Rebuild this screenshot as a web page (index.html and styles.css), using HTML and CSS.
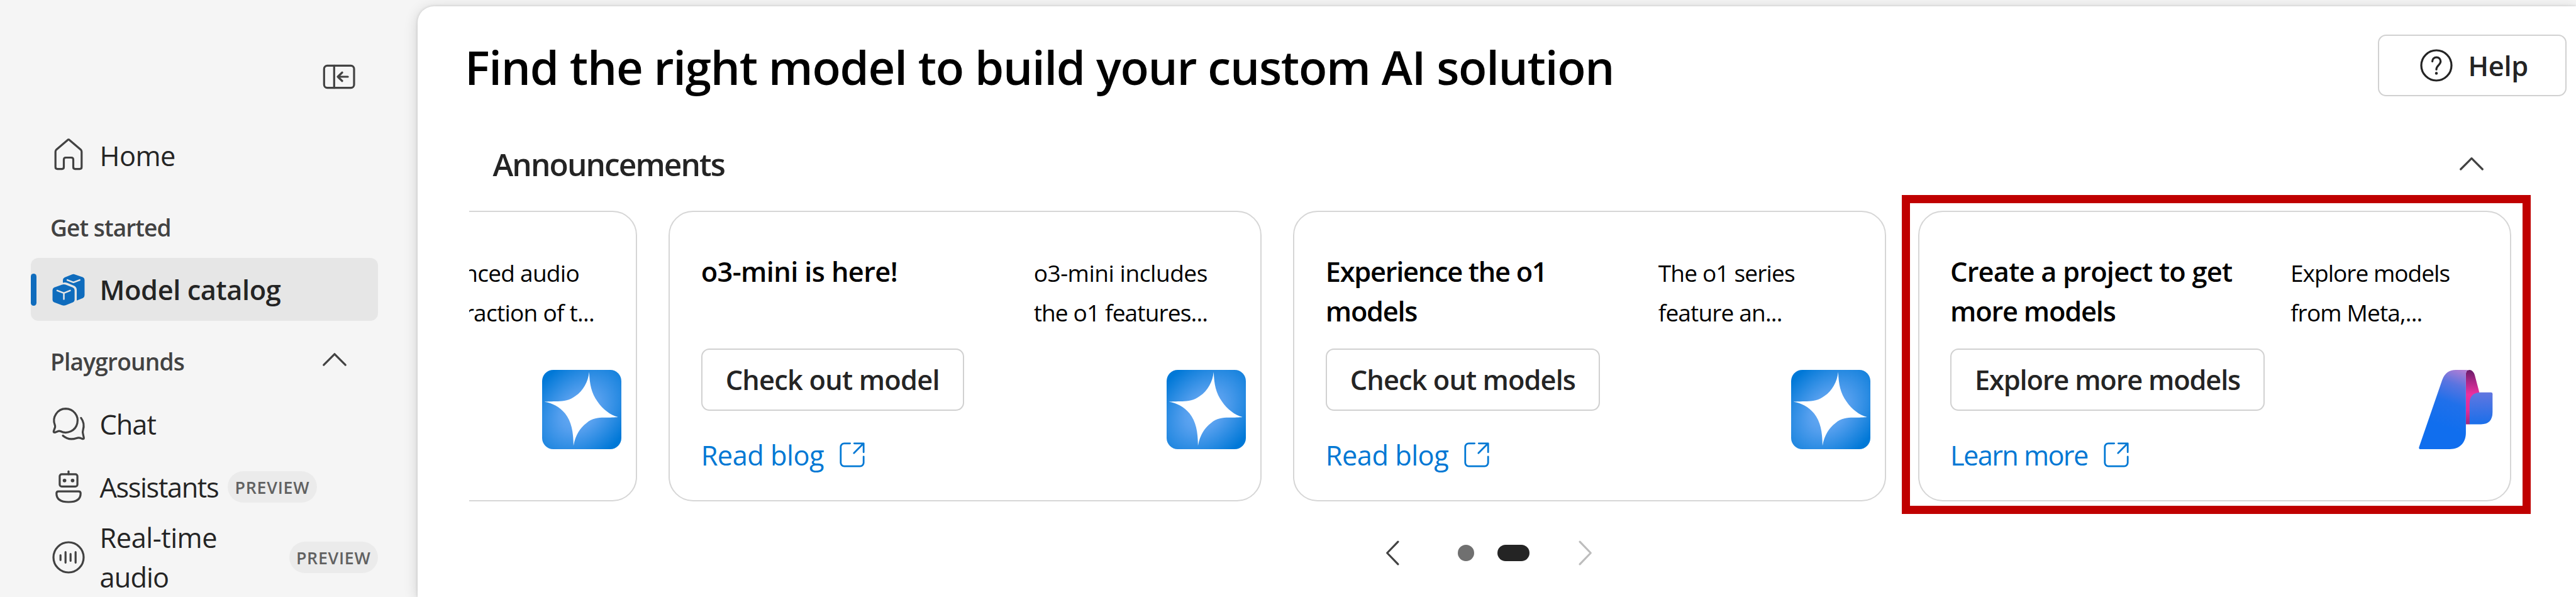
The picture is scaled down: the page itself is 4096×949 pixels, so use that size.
FILE: index.html
```html
<!DOCTYPE html>
<html lang="en">
<head>
<meta charset="utf-8">
<title>Model catalog</title>
<link rel="stylesheet" href="styles.css">
</head>
<body>
<svg class="defs" aria-hidden="true">
  <defs>
    <radialGradient id="gemFill" gradientUnits="userSpaceOnUse" cx="0" cy="0" r="1" gradientTransform="translate(48 52) rotate(-45) scale(82 60)">
      <stop offset="0" stop-color="#6fb0f6"/><stop offset=".35" stop-color="#559fee"/><stop offset="1" stop-color="#0078d7"/>
    </radialGradient>
    <linearGradient id="logoBig" gradientUnits="userSpaceOnUse" x1="285" y1="30" x2="175" y2="330">
      <stop offset="0" stop-color="#c07fd2"/><stop offset=".3" stop-color="#5a74e0"/><stop offset=".6" stop-color="#2070ea"/><stop offset="1" stop-color="#106eee"/>
    </linearGradient>
    <linearGradient id="logoPink" x1="0" y1="0" x2="0" y2="1">
      <stop offset="0" stop-color="#681b68"/><stop offset=".2" stop-color="#a82685"/><stop offset=".45" stop-color="#ec30a0"/><stop offset=".75" stop-color="#e02c9a"/><stop offset="1" stop-color="#9c2a80"/>
    </linearGradient>
    <linearGradient id="logoSmall" x1="0" y1="0" x2="0" y2="1">
      <stop offset="0" stop-color="#6176e0"/><stop offset="1" stop-color="#1a6fea"/>
    </linearGradient>
    <symbol id="gem" viewBox="0 0 100 100">
      <rect width="100" height="100" rx="14" fill="url(#gemFill)"/>
      <path fill="#fff" d="M59.4 2.5C58 15 52 26 42 33C35 38.5 27 39.5 20 39.6C12 39.7 6 39.8 3 40.2C12 41.5 22 46 29 55C37 65 39.5 78 39.6 95.7C42 82 48 73 56 67C63 61 71 60.3 78 60.2C86 60 92 60 95.8 59.5C86 57 76 49 70 40C62 29 60 18 59.4 2.5Z"/>
    </symbol>
    <symbol id="open" viewBox="0 0 20 20">
      <path d="M8.8 3.5H5.5a2 2 0 0 0-2 2v9a2 2 0 0 0 2 2h9a2 2 0 0 0 2-2V11M11.2 3.5h5.3v5M16.3 3.7L11 9"/>
    </symbol>
  </defs>
</svg>
<div class="app">
  <nav class="sidebar">
    <div class="collapse">
      <svg class="icon" viewBox="0 0 20 20"><rect x="2.6" y="4.5" width="14.9" height="11" rx="1.6"/><path d="M7.6 4.5v11M14.4 10H9.4M11.6 7.9L9.4 10l2.2 2.1"/></svg>
    </div>
    <a class="item item-home">
      <svg class="icon" viewBox="0 0 20 20"><path d="M3.5 8.2c0-.4.15-.7.4-1L9.5 2.4c.3-.28.7-.28 1 0l5.6 4.8c.25.3.4.6.4 1v7.6c0 .6-.4.95-.95.95h-2.3c-.55 0-.9-.4-.9-.95v-3.7c0-.6-.4-1-.95-1H8.6c-.55 0-.95.4-.95 1v3.7c0 .55-.35.95-.9.95h-2.3c-.55 0-.95-.35-.95-.95Z"/></svg>
      <span class="ls13">Home</span>
    </a>
    <div class="section section-start"><span class="ls25">Get started</span></div>
    <a class="item item-active">
      <svg class="icon cubes" viewBox="13 15 206 206">
        <path class="solid" d="M132 42Q141 38 150 42L190 56Q198 60 198 70V148Q198 158 190 162L158 175V122Q158 106 146 100L112 86Q100 81 87 84V70Q87 62 96 57Z"/>
        <path class="solid" d="M83 94Q92 90 101 94L138 108Q147 112 147 122V172Q147 180 139 184L101 199Q92 202 83 199L42 184Q34 180 34 172V122Q34 112 42 108Z"/>
        <path class="cut" d="M110 70L141 82L173 70M58 124L92 137L124 124M92 137V168"/>
      </svg>
      <span class="ls10">Model catalog</span>
    </a>
    <div class="section section-play">
      <span class="ls22">Playgrounds</span>
      <svg class="icon" viewBox="0 0 20 20"><path d="M4.6 11.9L10 6.5l5.4 5.4"/></svg>
    </div>
    <a class="item">
      <svg class="icon" viewBox="0 0 20 20"><path d="M8.6 2.4a5.9 5.9 0 1 1-2.6 11.2Q5.5 13.4 5 13.5L3.2 14.2Q2.5 14.3 2.6 13.6L3.3 11.6Q3.4 11 3.2 10.5A5.9 5.9 0 0 1 8.6 2.4ZM16.2 7C17.4 8.6 17.9 10.6 17.2 13Q16.9 14 17.2 15L17.6 16.8Q17.7 17.5 17 17.4L15.6 16.9Q14.8 16.7 14 17C11.5 17.9 9 17.4 7.2 15.8"/></svg>
      <span class="ls23">Chat</span>
    </a>
    <a class="item">
      <svg class="icon" viewBox="0 0 20 20"><path d="M10 2.3v1.4"/><rect x="5.6" y="3.7" width="8.8" height="6.1" rx="1"/><path d="M5 12.2h10q1 0 1 1C16 16.2 14 17.5 10 17.5S4 16.2 4 13.2q0-1 1-1Z"/><circle class="dotfill" cx="8" cy="6.8" r=".9"/><circle class="dotfill" cx="12" cy="6.8" r=".9"/></svg>
      <span class="ls32">Assistants</span>
      <span class="badge">PREVIEW</span>
    </a>
    <a class="item item-tall">
      <svg class="icon" viewBox="0 0 20 20"><circle cx="10" cy="10" r="7.5"/><path d="M6 8.9v2.4M8.5 7.4v5.2M11 8.3v3.4M13.5 7.4v5.2"/></svg>
      <span class="wide"><span class="ls11">Real-time</span><br><span class="ls20">audio</span></span>
      <span class="badge">PREVIEW</span>
    </a>
  </nav>

  <main class="main">
    <header class="header">
      <h1 class="ls17">Find the right model to build your custom AI solution</h1>
      <button class="btn help">
        <svg class="icon" viewBox="0 0 20 20"><circle cx="10" cy="10" r="7.5"/><path d="M8 8a2 2 0 0 1 4.1 0c0 1.8-2.1 2-2.1 4"/><circle class="dotfill" cx="10" cy="13.9" r=".7"/></svg>
        <span class="ls07">Help</span>
      </button>
    </header>

    <div class="ann-head">
      <h2 class="ls39">Announcements</h2>
      <svg class="icon" viewBox="0 0 20 20"><path d="M4.6 12.5L10 7.1l5.4 5.4"/></svg>
    </div>

    <section class="carousel">
      <div class="viewport">
        <article class="card">
          <div class="card-left"></div>
          <div class="card-side">
            <p class="desc desc-end"><span class="short ls20">nced audio</span><span class="ls20">raction of t...</span></p>
            <svg class="art"><use href="#gem"/></svg>
          </div>
        </article>
        <article class="card">
          <div class="card-left">
            <h3><span class="ls14">o3-mini is here!</span></h3>
            <button class="btn"><span class="ls18">Check out model</span></button>
            <a class="link"><span class="ls12">Read blog</span><svg class="icon-open"><use href="#open"/></svg></a>
          </div>
          <div class="card-side">
            <p class="desc"><span class="ls13">o3-mini includes</span><span class="ls24">the o1 features...</span></p>
            <svg class="art"><use href="#gem"/></svg>
          </div>
        </article>
        <article class="card">
          <div class="card-left">
            <h3><span class="ls29">Experience the o1</span><span class="ls29">models</span></h3>
            <button class="btn"><span class="ls21">Check out models</span></button>
            <a class="link"><span class="ls12">Read blog</span><svg class="icon-open"><use href="#open"/></svg></a>
          </div>
          <div class="card-side">
            <p class="desc"><span class="ls24">The o1 series</span><span class="ls24">feature an...</span></p>
            <svg class="art"><use href="#gem"/></svg>
          </div>
        </article>
        <article class="card card-project">
          <div class="card-left">
            <h3><span class="ls18">Create a project to get</span><span class="ls28">more models</span></h3>
            <button class="btn"><span class="ls27">Explore more models</span></button>
            <a class="link"><span class="ls37">Learn more</span><svg class="icon-open"><use href="#open"/></svg></a>
          </div>
          <div class="card-side">
            <p class="desc"><span class="ls27">Explore models</span><span class="ls23">from Meta,...</span></p>
            <svg class="art" viewBox="34 40 404 404">
              <path fill="url(#logoPink)" d="M287 317V60Q288 40 305 40Q324 41 332 66L357 160L307 210V317Z"/>
              <path fill="url(#logoBig)" d="M236 40H305Q288 40 287 60V360C287 412 255 444 205 444H56Q46 444 48 434L166 92Q184 40 236 40Z"/>
              <path fill="url(#logoSmall)" d="M306 317V210Q307 156 362 155H415Q423 155 423 163V255Q423 317 364 317Z"/>
            </svg>
          </div>
        </article>
      </div>
      <div class="highlight"></div>
    </section>

    <div class="pager">
      <svg class="icon prev" viewBox="0 0 20 20"><path d="M12.8 4.4L7.4 10l5.4 5.6"/></svg>
      <span class="dot"></span>
      <span class="dot dot-on"></span>
      <svg class="icon next" viewBox="0 0 20 20"><path d="M7.2 4.4l5.4 5.6-5.4 5.6"/></svg>
    </div>
  </main>
</div>
</body>
</html>
```

FILE: styles.css
```css
* { box-sizing: border-box; }
body {
  margin: 0;
  background: #f5f5f5;
  color: #242424;
  font-family: "Open Sans", "Noto Sans", sans-serif;
  font-size: 43.35px;
  line-height: 63px;
}
h1, h2, h3, p { margin: 0; font-weight: 600; }
.defs { position: absolute; width: 0; height: 0; }
.app { display: flex; width: 4096px; height: 949px; overflow: hidden; }

.icon {
  flex: none;
  width: 64px;
  height: 64px;
  fill: none;
  stroke: #424242;
  stroke-width: 1;
  stroke-linecap: round;
  stroke-linejoin: round;
}
.dotfill { fill: #424242; stroke: none; }

/* Sidebar */
.sidebar {
  flex: none;
  width: 664px;
  padding: 90px 63px 0 48.5px;
  display: flex;
  flex-direction: column;
}
.collapse { display: flex; justify-content: flex-end; height: 64px; padding-right: 30px; }
.item {
  flex: none;
  display: flex;
  align-items: center;
  height: 100px;
  padding-left: 28px;
  white-space: nowrap;
}
.item > .icon { display: block; margin-right: 18px; }
.item-home { margin-top: 43px; }
.item-active {
  position: relative;
  margin-top: 24px;
  background: #e6e6e6;
  border-radius: 12px;
  font-weight: 600;
}
.item-active::before {
  content: "";
  position: absolute;
  left: 0;
  top: 24.5px;
  width: 9.5px;
  height: 51px;
  border-radius: 5px;
  background: #0f6cbd;
}
.cubes { stroke: none; }
.solid { fill: #0f6cbd; }
.cut { fill: none; stroke: #e6e6e6; stroke-width: 8; }
.item-tall { height: 124px; }
.wide { flex: 1; }
.badge {
  flex: none;
  width: 141.5px;
  height: 50.5px;
  margin-left: 15px;
  border-radius: 26px;
  background: #ebebeb;
  color: #616161;
  font-size: 26.8px;
  font-weight: 600;
  line-height: 51px;
  letter-spacing: .7px;
  text-align: center;
}
.section {
  flex: none;
  display: flex;
  align-items: center;
  justify-content: space-between;
  height: 50px;
  padding: 0 37px 0 31.5px;
  color: #424242;
  font-size: 37.1px;
  font-weight: 600;
}
.section-start { margin-top: 39px; }
.section-play { margin: 39px 0 25px; }

/* Main panel */
.main {
  flex: none;
  width: 3432px;
  margin-top: 10px;
  padding-top: 45px;
  display: flex;
  flex-direction: column;
  background: #fff;
  border-top-left-radius: 26px;
  box-shadow: 0 4px 22px rgba(0, 0, 0, .16), 0 0 4px rgba(0, 0, 0, .14);
}
.header {
  display: flex;
  justify-content: space-between;
  align-items: center;
  height: 98px;
  padding: 0 15px 0 75px;
}
h1 { padding-top: 5px; color: #000; font-size: 74.3px; line-height: 90px; white-space: nowrap; }
.btn {
  display: flex;
  align-items: center;
  height: 99px;
  padding: 0 37px;
  border: 2.5px solid #d1d1d1;
  border-radius: 13px;
  background: #fff;
  color: #242424;
  font: inherit;
  font-weight: 600;
  white-space: nowrap;
}
.help { width: 300px; height: 98px; padding: 0 0 0 59px; gap: 18.5px; }
.help .icon { stroke: #242424; }
.help .dotfill { fill: #242424; }
.ann-head {
  display: flex;
  justify-content: space-between;
  align-items: center;
  height: 64px;
  margin-top: 76px;
  padding: 0 134px 0 119.5px;
}
h2 { font-size: 49.6px; }

/* Announcement cards */
.carousel { position: relative; width: 3246.5px; height: 462px; margin: 42px 0 0 82px; }
.viewport { display: flex; justify-content: flex-end; gap: 50.2px; height: 100%; overflow: hidden; }
.card {
  flex: none;
  width: 943px;
  display: flex;
  padding: 62.5px 23px 0 49.5px;
  border: 2.5px solid #d6d6d6;
  border-radius: 39px;
  color: #000;
}
.card-left {
  flex: none;
  width: 529px;
  display: flex;
  flex-direction: column;
  align-items: flex-start;
}
.card-project .card-left { width: 541px; }
h3 { height: 126px; margin-bottom: 28px; font-size: inherit; white-space: nowrap; }
h3 span, .desc span { display: block; }
.link {
  display: flex;
  align-items: center;
  gap: 17px;
  margin-top: 39px;
  color: #0078d4;
}
.icon-open {
  width: 56px;
  height: 56px;
  fill: none;
  stroke: #0078d4;
  stroke-width: 1;
  stroke-linecap: round;
  stroke-linejoin: round;
}
.card-side { flex: 1; display: flex; flex-direction: column; padding-top: 2px; }
.desc { height: 126px; font-size: 37.1px; font-weight: 400; white-space: nowrap; }
.desc-end { padding-right: 43px; text-align: right; }
.desc-end .short { margin-right: 24px; }
.art { display: block; align-self: flex-end; width: 126px; height: 126px; margin-top: 60px; }
.highlight {
  position: absolute;
  top: -25.5px;
  right: -31.5px;
  width: 1000px;
  height: 507.5px;
  border: 13px solid #c00000;
}

.pager { display: flex; align-items: center; height: 64px; margin: 50px 0 0 1518px; }
.dot { width: 25.5px; height: 25.5px; margin-left: 37px; border-radius: 13px; background: #707070; }
.prev { margin-right: 35px; }
.dot-on { width: 51px; background: #242424; }
.next { margin-left: 57px; stroke: #bdbdbd; }

/* Letter spacing steps */
.ls07 { letter-spacing: -.007em; }
.ls10 { letter-spacing: -.0095em; }
.ls11 { letter-spacing: -.011em; }
.ls12 { letter-spacing: -.012em; }
.ls13 { letter-spacing: -.013em; }
.ls14 { letter-spacing: -.014em; }
.ls17 { letter-spacing: -.0168em; }
.ls18 { letter-spacing: -.018em; }
.ls20 { letter-spacing: -.0205em; }
.ls21 { letter-spacing: -.0213em; }
.ls22 { letter-spacing: -.0216em; }
.ls23 { letter-spacing: -.0233em; }
.ls24 { letter-spacing: -.0235em; }
.ls25 { letter-spacing: -.0253em; }
.ls27 { letter-spacing: -.027em; }
.ls28 { letter-spacing: -.0276em; }
.ls29 { letter-spacing: -.0294em; }
.ls32 { letter-spacing: -.032em; }
.ls37 { letter-spacing: -.0374em; }
.ls39 { letter-spacing: -.0386em; }
```
